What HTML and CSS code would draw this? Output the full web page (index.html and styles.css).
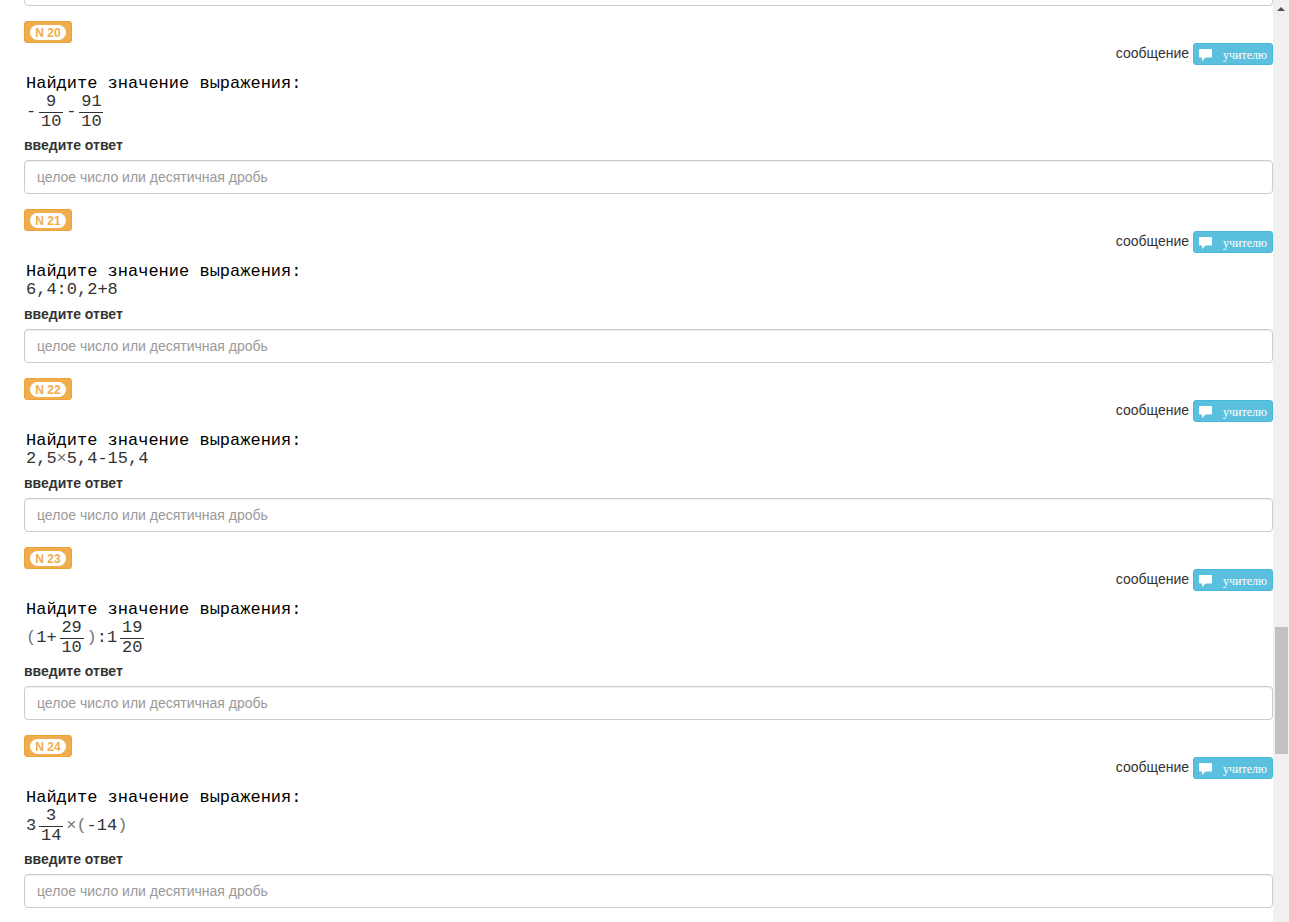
FILE: index.html
```
<!DOCTYPE html>
<html lang="ru">
<head>
<meta charset="utf-8">
<title>Задания</title>
<link rel="stylesheet" href="styles.css">
</head>
<body class="page">
<svg class="sprite" aria-hidden="true">
  <symbol id="comment" viewBox="0 0 14 14"><path d="M1 1h11a1 1 0 0 1 1 1v6.500a1 1 0 0 1-1 1H6.500L3 13V9.500H1a1 1 0 0 1-1-1V2a1 1 0 0 1 1-1z" fill="currentColor"/></symbol>
</svg>
<main class="tasks">
  <section class="task task-previous">
    <input class="answer" type="text" aria-label="введите ответ">
  </section>

  <section class="task">
    <button class="number" type="button"><span class="pill">N 20</span></button>
    <div class="message"><span>сообщение</span><button class="teacher" type="button"><svg class="icon"><use href="#comment"/></svg><span>учителю</span></button></div>
    <div class="question">
      <p class="prompt">Найдите значение выражения:</p>
      <div class="formula"><span>-</span><span class="fraction"><span class="num">9</span><span class="den">10</span></span><span>-</span><span class="fraction"><span class="num">91</span><span class="den">10</span></span></div>
    </div>
    <label class="caption" for="a20">введите ответ</label>
    <input class="answer" id="a20" type="text" placeholder="целое число или десятичная дробь">
  </section>

  <section class="task">
    <button class="number" type="button"><span class="pill">N 21</span></button>
    <div class="message"><span>сообщение</span><button class="teacher" type="button"><svg class="icon"><use href="#comment"/></svg><span>учителю</span></button></div>
    <div class="question">
      <p class="prompt">Найдите значение выражения:</p>
      <div class="formula"><span>6,4:0,2+8</span></div>
    </div>
    <label class="caption" for="a21">введите ответ</label>
    <input class="answer" id="a21" type="text" placeholder="целое число или десятичная дробь">
  </section>

  <section class="task">
    <button class="number" type="button"><span class="pill">N 22</span></button>
    <div class="message"><span>сообщение</span><button class="teacher" type="button"><svg class="icon"><use href="#comment"/></svg><span>учителю</span></button></div>
    <div class="question">
      <p class="prompt">Найдите значение выражения:</p>
      <div class="formula"><span>2,5<span class="light">×</span>5,4-15,4</span></div>
    </div>
    <label class="caption" for="a22">введите ответ</label>
    <input class="answer" id="a22" type="text" placeholder="целое число или десятичная дробь">
  </section>

  <section class="task">
    <button class="number" type="button"><span class="pill">N 23</span></button>
    <div class="message"><span>сообщение</span><button class="teacher" type="button"><svg class="icon"><use href="#comment"/></svg><span>учителю</span></button></div>
    <div class="question">
      <p class="prompt">Найдите значение выражения:</p>
      <div class="formula"><span><span class="light">(</span>1+</span><span class="fraction"><span class="num">29</span><span class="den">10</span></span><span><span class="light">)</span>:1</span><span class="fraction"><span class="num">19</span><span class="den">20</span></span></div>
    </div>
    <label class="caption" for="a23">введите ответ</label>
    <input class="answer" id="a23" type="text" placeholder="целое число или десятичная дробь">
  </section>

  <section class="task">
    <button class="number" type="button"><span class="pill">N 24</span></button>
    <div class="message"><span>сообщение</span><button class="teacher" type="button"><svg class="icon"><use href="#comment"/></svg><span>учителю</span></button></div>
    <div class="question">
      <p class="prompt">Найдите значение выражения:</p>
      <div class="formula"><span>3</span><span class="fraction"><span class="num">3</span><span class="den">14</span></span><span><span class="light">×(</span>-14<span class="light">)</span></span></div>
    </div>
    <label class="caption" for="a24">введите ответ</label>
    <input class="answer" id="a24" type="text" placeholder="целое число или десятичная дробь">
  </section>
</main>
<div class="scrollbar" aria-hidden="true">
  <svg class="arrow" viewBox="0 0 8 4"><path d="M0 4L4 0L8 4z" fill="#505050"/></svg>
  <div class="track"><div class="thumb"></div></div>
</div>
</body>
</html>
```
FILE: styles.css
```
* { box-sizing: border-box; }

.page {
  display: flex;
  height: 100vh;
  margin: 0;
  overflow: hidden;
  background: #fff;
  color: #333;
  font: 14px/20px "Liberation Sans", Arial, sans-serif;
}

.sprite { position: absolute; width: 0; height: 0; }

.tasks {
  flex: 1;
  min-width: 0;
  padding-left: 24px;
  overflow: hidden;
}

.task {
  display: flex;
  flex-direction: column;
  margin-bottom: 15px;
}

.task-previous { margin-top: -28px; }

.number, .teacher {
  display: flex;
  align-items: center;
  height: 22px;
  border: 1px solid;
  border-radius: 3px;
  padding: 0 5px;
  font-size: 12px;
  line-height: 18px;
}

.number {
  align-self: flex-start;
  background: #f0ad4e;
  border-color: #eea236;
  font-family: "Liberation Sans", Arial, sans-serif;
}

.pill {
  min-width: 36px;
  padding: 2px 5px 1px;
  border-radius: 10px;
  background: #fff;
  color: #f0ad4e;
  font-weight: bold;
  line-height: 12px;
}

.message {
  display: flex;
  justify-content: flex-end;
  align-items: flex-start;
  gap: 4px;
}

.teacher {
  justify-content: space-between;
  width: 80px;
  padding-top: 1px;
  background: #5bc0de;
  border-color: #46b8da;
  color: #fff;
  font-family: "Liberation Serif", "Times New Roman", serif;
}

.icon { width: 14px; height: 14px; }

.question {
  margin: 10px 0 5px;
  padding-left: 2px;
  color: #000;
  font: 17px/18px "Liberation Mono", "Courier New", monospace;
}

.prompt { margin: 0; }

.formula {
  display: flex;
  align-items: center;
  color: #333;
}

.light { color: #777; }

.fraction {
  display: flex;
  flex-direction: column;
  width: 24px;
  margin: 0 3px;
  text-align: center;
}

.num {
  padding-bottom: 1px;
  border-bottom: 1px solid #333;
}

.den { line-height: 17px; }

.caption {
  margin-bottom: 5px;
  font-weight: bold;
}

.answer {
  width: 100%;
  height: 34px;
  padding: 6px 12px;
  border: 1px solid #ccc;
  border-radius: 4px;
  background: #fff;
  box-shadow: inset 0 1px 1px rgba(0, 0, 0, .075);
  color: #555;
  font: 14px/20px "Liberation Sans", Arial, sans-serif;
}

.answer::placeholder { color: #999; opacity: 1; }

.scrollbar {
  display: flex;
  flex-direction: column;
  width: 16px;
  padding: 7px 1px 0 2px;
  background: #f0f0f0;
}

.arrow { width: 8px; height: 4px; margin-left: 2px; }

.track { flex: 1; display: flex; flex-direction: column; }

.track::before { content: ""; flex: 616; }

.thumb { flex: 127; background: #c1c1c1; }

.track::after { content: ""; flex: 168; }
```
